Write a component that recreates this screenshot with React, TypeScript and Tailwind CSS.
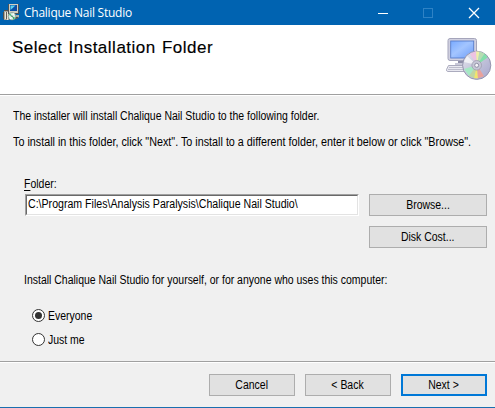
import React from "react";

const narrow = "inline-block scale-x-[0.873]";
const buttonBase =
  "flex h-[22px] items-center justify-center bg-[#e1e1e1] text-[12px] leading-[14px] whitespace-nowrap";

function Button({ label, className }: { label: string; className: string }) {
  return (
    <button type="button" className={`${buttonBase} ${className}`}>
      <span className={narrow}>{label}</span>
    </button>
  );
}

function AppIcon() {
  return (
    <svg width="17" height="17" viewBox="0 0 17 17" className="shrink-0">
      <path d="M1 6h5v2H1zM0 8h2v7H0z" fill="#55534c" />
      <path d="M1 7h5v9H1z" fill="#a9a69a" />
      <path d="M2 8h1v7H2zM4 8h1v8H4z" fill="#e9e6da" />
      <path d="M3 8h1v7H3z" fill="#605e57" />
      <path d="M5 0h11v10H5z" fill="#4b5257" />
      <path d="M6 0h9v9H6z" fill="#d0ccc0" />
      <path d="M7 1h7v6H7z" fill="#0a4fa8" />
      <path d="M7.5 1.5h5L7.5 6z" fill="#5ad2f0" />
      <path d="M9 11h7v2l-3 2H9z" fill="#b4b0a4" />
      <path d="M11 13h4v1l-2 1h-2z" fill="#55534c" />
      <circle cx="9" cy="12.3" r="3.8" fill="#d5eee2" stroke="#6b7d74" strokeWidth=".6" />
      <path d="m9 12.3-3-1.2 1-1.6zM9 12.3l3 1.4-1.4 1.7z" fill="#31ac68" />
      <path d="m9 12.3 1-3.3 1.6 1zM9 12.3l-1 3.3-1.4-1z" fill="#fff" />
      <circle cx="9" cy="12.3" r=".8" fill="#46645c" />
    </svg>
  );
}

function InstallerIcon() {
  return (
    <svg width="46" height="44" viewBox="0 0 46 44" className="shrink-0">
      <defs>
        <linearGradient id="screen" x1="0" y1="0" x2="1" y2="1">
          <stop stopColor="#79aaff" />
          <stop offset=".45" stopColor="#a3c5ff" />
          <stop offset="1" stopColor="#6c9cf8" />
        </linearGradient>
        <linearGradient id="disc" x1="0" y1="0" x2="1" y2="1">
          <stop stopColor="#e8e8ef" />
          <stop offset=".5" stopColor="#c3c4da" />
          <stop offset="1" stopColor="#a5a5cd" />
        </linearGradient>
      </defs>
      <path d="M12 23h6v4h-6z" fill="#8e8ea8" />
      <path d="M9 26h16v2H9z" fill="#c8c8d8" />
      <rect x="2" y="1.5" width="28.5" height="22" rx="2" fill="#d0d0e0" stroke="#a5a5bb" />
      <rect x="4.7" y="4" width="23" height="17" fill="url(#screen)" stroke="#587dca" strokeWidth=".9" />
      <path d="M2.5 28.5h21l-2 6h-20q-1 0-1-2z" fill="#e8e8f0" stroke="#a3a3b7" strokeWidth=".9" />
      <path d="M3.5 30.5H20M2.5 32.5H20" stroke="#9292a8" strokeDasharray="1 1" />
      <circle cx="30.7" cy="28.3" r="14.1" fill="url(#disc)" stroke="#9595ae" />
      <path d="m31 28-7-11 6-3z" fill="#eec3e2" />
      <path d="m31 28-1-13.5h3.5z" fill="#eef0a8" />
      <path d="m31 28 2.5-13.5 5 2z" fill="#b6ddb2" />
      <path d="m31 28 7.5-11.5 3 4z" fill="#83dfaa" />
      <path d="m31 28-13 4 5 7z" fill="#a5e9c4" />
      <path d="m31 28-8 11 5 2z" fill="#c0d7a2" />
      <path d="m31 28-3 13.3h4z" fill="#f1e66b" />
      <path d="m31 28 1 13.3 6-2z" fill="#e9a19b" />
      <path d="m31 28-13-3 3-6z" fill="#fff" opacity=".65" />
      <circle cx="30.7" cy="28.3" r="4.8" fill="#c6c6d6" stroke="#9c9caf" strokeWidth=".8" />
      <circle cx="30.7" cy="28.3" r="2" fill="#f6f6fa" stroke="#9090a5" />
    </svg>
  );
}

function Radio({ label, checked = false }: { label: string; checked?: boolean }) {
  return (
    <label className="flex h-6 items-center">
      <svg width="13" height="13" viewBox="0 0 13 13" className="mr-[3px] shrink-0">
        <circle cx="6.5" cy="6.5" r="6" fill="#fff" stroke="#333" />
        {checked && <circle cx="6.5" cy="6.5" r="3.5" fill="#333" />}
      </svg>
      <span className={`${narrow} mt-[2px] origin-left leading-[14px]`}>{label}</span>
    </label>
  );
}

export default function App() {
  return (
    <main className="flex h-[408px] w-[495px] flex-col overflow-hidden border-b border-[#1a6faf] bg-[#f0f0f0] font-['Liberation_Sans',Arial,sans-serif] text-[12px] text-black">
      <header className="flex h-[25px] shrink-0 items-center bg-[#0063b1] pl-[3px] text-white">
        <AppIcon />
        <h1 className="ml-[4px] font-['Open_Sans','Noto_Sans',sans-serif] text-[12px] leading-none tracking-[-0.25px] whitespace-nowrap">Chalique Nail Studio</h1>
        <div className="ml-auto flex items-center pr-[15px]">
          <svg width="102" height="12" viewBox="0 0 102 12">
            <path d="M0 6.5h10" stroke="white" />
            <rect x="45.5" y="1.5" width="9" height="9" fill="none" stroke="#2e82c5" />
            <path d="m91 1 10 10M101 1 91 11" stroke="white" strokeWidth="1.3" />
          </svg>
        </div>
      </header>

      <section className="flex h-[70px] shrink-0 items-start justify-between border-b border-[#a0a0a0] bg-white pt-[12px] pr-[3px] pl-[12px]">
        <h2 className="pt-[2px] text-[17px] leading-[18px] tracking-[0.5px] [word-spacing:1px] whitespace-nowrap [-webkit-text-stroke:0.15px_black]">Select Installation Folder</h2>
        <InstallerIcon />
      </section>

      <section className="flex h-[267px] shrink-0 flex-col border-t border-b border-t-white border-b-[#a0a0a0]">
        <div className="pt-[12px] pl-[13px] whitespace-nowrap">
          <p className="h-[26px] leading-[16px]"><span className={`${narrow} origin-left`}>The installer will install Chalique Nail Studio to the following folder.</span></p>
          <p className="h-[16px] leading-[16px]"><span className="inline-block origin-left scale-x-[0.898]">To install in this folder, click "Next". To install to a different folder, enter it below or click "Browse".</span></p>
        </div>
        <label htmlFor="folder" className="mt-[26px] ml-[24px] h-[18px] text-[12px] leading-[16px]"><span className={`${narrow} origin-left`}><span className="underline underline-offset-2">F</span>older:</span></label>
        <div className="flex pl-[25px]">
          <div className="flex h-[22px] w-[334px] border border-t-[#a0a0a0] border-r-white border-b-white border-l-[#a0a0a0]">
            <div className="flex w-full border border-t-[#696969] border-r-[#e3e3e3] border-b-[#e3e3e3] border-l-[#696969] bg-white pl-px">
              <input id="folder" readOnly value={"C:\\Program Files\\Analysis Paralysis\\Chalique Nail Studio\\"} className="h-[16px] w-[370px] shrink-0 origin-left scale-x-[0.883] bg-transparent text-[12px] leading-[14px] outline-none" />
            </div>
          </div>
          <div className="ml-[10px] flex w-[118px] shrink-0 flex-col gap-[10px]">
            <Button label="Browse..." className="w-full border border-[#adadad]" />
            <Button label="Disk Cost..." className="w-full border border-[#adadad]" />
          </div>
        </div>
        <p className="mt-[24px] ml-[24px] h-[16px] leading-[16px] whitespace-nowrap"><span className={`${narrow} origin-left`}>Install Chalique Nail Studio for yourself, or for anyone who uses this computer:</span></p>
        <div className="mt-[15px] ml-[32px]">
          <Radio label="Everyone" checked />
          <Radio label="Just me" />
        </div>
      </section>

      <footer className="flex flex-1 items-start justify-end gap-[10px] border-t border-white pt-[11px] pr-[8px]">
        <Button label="Cancel" className="w-[86px] border border-[#adadad]" />
        <Button label="< Back" className="w-[86px] border border-[#adadad]" />
        <Button label="Next >" className="w-[86px] border-2 border-[#0078d7]" />
      </footer>
    </main>
  );
}
